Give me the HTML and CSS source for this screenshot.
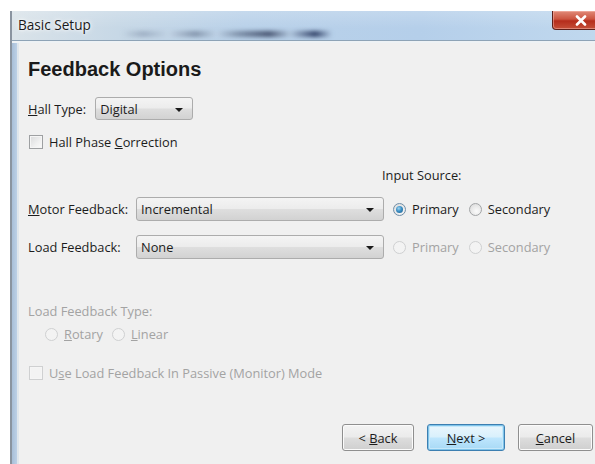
FILE: index.html
```html
<!DOCTYPE html>
<html>
<head>
<meta charset="utf-8">
<title>Basic Setup</title>
<link rel="stylesheet" href="styles.css">
</head>
<body>
<div class="window">
  <div class="titlebar">
    <span class="title">Basic Setup</span>
    <div class="glass-blur"></div>
    <button class="close-btn" aria-label="Close">
      <svg width="12" height="11" viewBox="0 0 12 11"><path d="M2 1.5 L10 9.5 M10 1.5 L2 9.5" stroke="#fff" stroke-width="2.6" stroke-linecap="round"/></svg>
    </button>
  </div>
  <div class="frame">
    <div class="content">
      <h1 class="heading">Feedback Options</h1>

      <div class="row hall-row">
        <span class="label"><u>H</u>all Type:</span>
        <div class="combo combo-hall"><span>Digital</span><i class="arrow"></i></div>
      </div>

      <label class="check-row phase-row">
        <span class="checkbox"></span>
        <span>Hall Phase <u>C</u>orrection</span>
      </label>

      <div class="feedback-grid">
        <span class="input-source">Input Source:</span>

        <span class="label motor-label"><u>M</u>otor Feedback:</span>
        <div class="combo motor-combo"><span>Incremental</span><i class="arrow"></i></div>
        <div class="radios motor-radios">
          <span class="radio checked"></span><span class="radio-text">Primary</span>
          <span class="radio"></span><span class="radio-text">Secondary</span>
        </div>

        <span class="label load-label">Load Feedback:</span>
        <div class="combo load-combo"><span>None</span><i class="arrow"></i></div>
        <div class="radios disabled load-radios">
          <span class="radio"></span><span class="radio-text">Primary</span>
          <span class="radio"></span><span class="radio-text">Secondary</span>
        </div>
      </div>

      <div class="disabled type-label">Load Feedback Type:</div>
      <div class="radios disabled type-radios">
        <span class="radio"></span><span class="radio-text"><u>R</u>otary</span>
        <span class="radio"></span><span class="radio-text"><u>L</u>inear</span>
      </div>

      <label class="check-row disabled passive-row">
        <span class="checkbox"></span>
        <span>U<u>s</u>e Load Feedback In Passive (Monitor) Mode</span>
      </label>

      <div class="buttons">
        <button class="btn btn-back">&lt; <u>B</u>ack</button>
        <button class="btn btn-default"><u>N</u>ext &gt;</button>
        <button class="btn"><u>C</u>ancel</button>
      </div>
    </div>
  </div>
</div>
</body>
</html>
```

FILE: styles.css
```css
html, body {
  margin: 0;
  padding: 0;
  background: #ffffff;
  width: 595px;
  height: 464px;
  overflow: hidden;
}

body {
  font-family: "Open Sans", "Noto Sans", "DejaVu Sans", sans-serif;
  font-size: 12.8px;
  color: #1c1c1c;
}

u {
  text-decoration: underline;
  text-underline-offset: 1px;
}

.window {
  margin: 11px 0 0 10px;
  height: 453px;
  display: flex;
  flex-direction: column;
  border-left: 2px solid #8a94a0;
}

/* ---- title bar (Aero glass) ---- */
.titlebar {
  position: relative;
  height: 29px;
  flex: none;
  display: flex;
  align-items: flex-start;
  justify-content: space-between;
  background:
    linear-gradient(180deg, rgba(255,255,255,0.18) 0%, rgba(255,255,255,0) 60%),
    linear-gradient(90deg, #dae3e9 0%, #c7d8e6 18%, #b9d1e9 40%, #b5cfea 70%, #c0d8ee 100%);
  border-bottom: 1px solid #8ea3b6;
  overflow: hidden;
}

.title {
  position: relative;
  z-index: 1;
  margin: 4px 0 0 6px;
  font-size: 13.6px;
  color: #1a1a1a;
  text-shadow: 0 0 6px #ffffff, 0 0 3px #ffffff;
}

.glass-blur {
  position: absolute;
  left: 110px;
  top: 20px;
  width: 210px;
  height: 6px;
  background: linear-gradient(90deg,
    rgba(150,165,185,0) 0%,
    rgba(120,135,160,0.5) 10%,
    rgba(200,210,225,0.3) 22%,
    rgba(90,105,130,0.6) 35%,
    rgba(200,210,225,0.2) 45%,
    rgba(90,105,130,0.6) 55%,
    rgba(40,50,80,0.8) 70%,
    rgba(160,175,195,0.3) 80%,
    rgba(30,45,85,0.9) 92%,
    rgba(120,140,170,0) 100%);
  filter: blur(2px);
}

.close-btn {
  margin: 0;
  padding: 0;
  width: 58px;
  height: 19px;
  margin-right: -15px;
  border: 1px solid #5e201a;
  border-top: none;
  border-radius: 0 0 0 4px;
  background: linear-gradient(180deg, #e08a78 0%, #cc5540 45%, #b52d1c 55%, #c54f38 100%);
  box-shadow: inset 0 0 0 1px rgba(255,200,190,0.45);
  display: flex;
  align-items: center;
  justify-content: center;
}

/* ---- frame and client area ---- */
.frame {
  flex: 1;
  display: flex;
  border-top: 2px solid #eef2f5;
}

.frame::before {
  content: "";
  width: 5px;
  flex: none;
  background: linear-gradient(90deg, #a8bfd8, #bcd0e6);
  border-right: 2px solid #dfe6ec;
}

.content {
  flex: 1;
  background: #f0f0f0;
  padding: 14px 0 0 9px;
  display: flex;
  flex-direction: column;
}

.heading {
  margin: 0;
  font-family: "Liberation Sans", Arial, sans-serif;
  font-weight: bold;
  font-size: 20px;
  line-height: 25px;
  color: #1a1a1a;
}

.row {
  display: flex;
  align-items: center;
}

.label {
  white-space: nowrap;
}

.hall-row {
  margin-top: 15px;
  gap: 9px;
}

/* ---- combo boxes ---- */
.combo {
  box-sizing: border-box;
  height: 24px;
  border: 1px solid #acacac;
  border-radius: 3px;
  background: linear-gradient(180deg, #f4f4f4 0%, #ececec 48%, #dedede 52%, #d2d2d2 100%);
  display: flex;
  align-items: center;
  justify-content: space-between;
  padding: 0 9px 0 4px;
}

.combo-hall {
  width: 98px;
  height: 23px;
}

.arrow {
  width: 0;
  height: 0;
  border-left: 4px solid transparent;
  border-right: 4px solid transparent;
  border-top: 4px solid #1a1a1a;
  margin-top: 2px;
}

/* ---- checkboxes ---- */
.check-row {
  display: flex;
  align-items: center;
  gap: 6px;
  margin-left: 1px;
}

.phase-row {
  margin-top: 14px;
  height: 16px;
}

.checkbox {
  box-sizing: border-box;
  width: 14px;
  height: 14px;
  border: 1px solid #9ea0a2;
  background: linear-gradient(135deg, #d9dadb 0%, #f0f0f0 60%, #fbfbfb 100%);
  box-shadow: inset 0 0 0 1px #f5f5f5;
}

/* ---- motor / load feedback grid ---- */
.feedback-grid {
  margin-top: 17px;
  display: grid;
  grid-template-columns: 108px 248px auto;
  grid-template-rows: 16px 24px 24px;
  row-gap: 14px;
  align-items: center;
}

.input-source {
  grid-column: 3;
  grid-row: 1;
  margin-left: -2px;
}

.motor-label  { grid-column: 1; grid-row: 2; }
.motor-combo  { grid-column: 2; grid-row: 2; }
.motor-radios { grid-column: 3; grid-row: 2; }
.load-label   { grid-column: 1; grid-row: 3; }
.load-combo   { grid-column: 2; grid-row: 3; }
.load-radios  { grid-column: 3; grid-row: 3; }

.radios {
  display: flex;
  align-items: center;
  padding-left: 9px;
}

.radio {
  box-sizing: border-box;
  width: 13px;
  height: 13px;
  border-radius: 50%;
  border: 1px solid #a2a4a6;
  background: radial-gradient(circle at 60% 65%, #fbfbfb 0%, #e6e6e6 60%, #d4d4d4 100%);
  margin-right: 6px;
  position: relative;
}

.radio.checked {
  border-color: #6f8ea8;
}

.radio.checked::after {
  content: "";
  position: absolute;
  left: 2px;
  top: 2px;
  width: 7px;
  height: 7px;
  border-radius: 50%;
  background: radial-gradient(circle at 40% 35%, #9fd6f3 0%, #3b8fc4 45%, #1c5a8a 100%);
}

.radio-text {
  margin-right: 10px;
}

.disabled {
  color: #a3a3a3;
}

.disabled .radio,
.disabled .checkbox {
  border-color: #cfd0d1;
  background: #f3f3f3;
}

.type-label {
  margin-top: 44px;
  line-height: 16px;
}

.type-radios {
  margin-top: 7px;
  padding-left: 17px;
  height: 16px;
}

.type-radios .radio-text {
  margin-right: 9px;
}

.passive-row {
  margin-top: 23px;
  height: 16px;
}

/* ---- dialog buttons ---- */
.buttons {
  margin-top: 43px;
  display: flex;
  justify-content: flex-end;
  gap: 13px;
  padding-right: 2px;
}

.btn {
  font-family: inherit;
  font-size: 12.8px;
  color: #1c1c1c;
  height: 27px;
  min-width: 75px;
  padding: 0 8px;
  border: 1px solid #8f8f8f;
  border-radius: 3px;
  background: linear-gradient(180deg, #f3f3f3 0%, #ebebeb 48%, #dddddd 52%, #cfcfcf 100%);
  box-shadow: inset 0 0 0 1px #fbfbfb;
}

.btn-back {
  min-width: 72px;
}

.btn-default {
  min-width: 78px;
  border-color: #3c7fb1;
  background: linear-gradient(180deg, #eaf6fd 0%, #d9f0fc 48%, #bee6fd 52%, #a7d9f5 100%);
  box-shadow: inset 0 0 0 1px #7fc4ea, inset 0 0 0 2px #c6e8fa;
}
```
